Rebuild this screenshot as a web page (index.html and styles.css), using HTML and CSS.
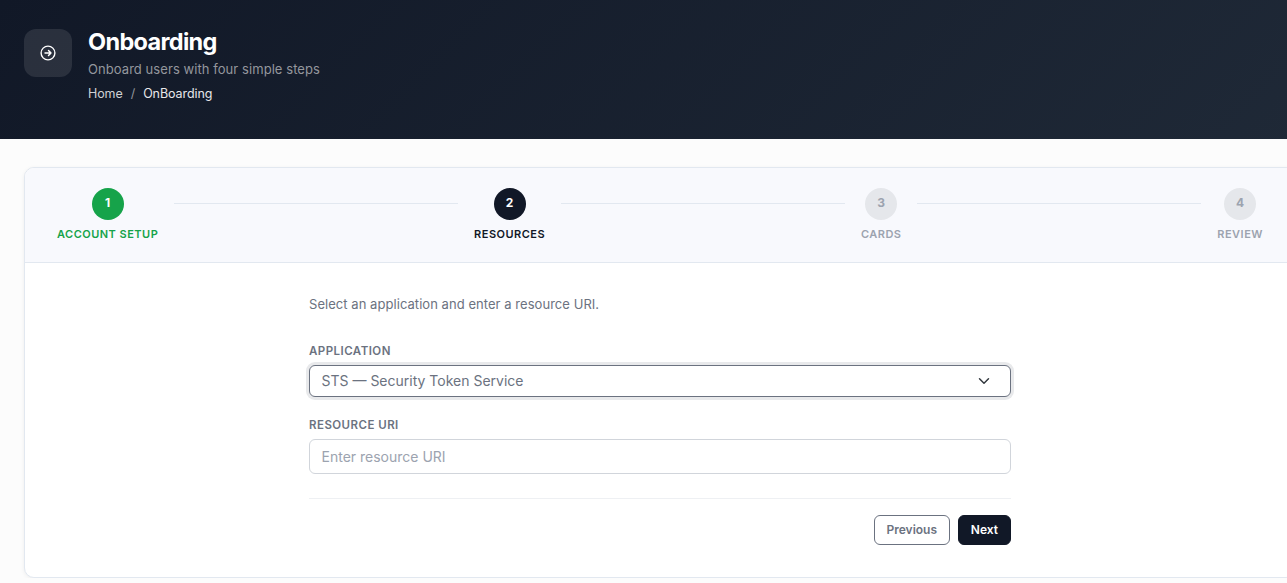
FILE: index.html
```html
<!DOCTYPE html>
<html lang="en">
<head>
    <meta charset="UTF-8">
    <meta name="viewport" content="width=device-width, initial-scale=1.0">
    <title>Onboarding</title>
    <link rel="stylesheet" href="styles.css">
</head>
<body>
    <header class="page-header">
        <div class="header-icon">
            <svg width="16" height="16" viewBox="0 0 16 16" fill="none" stroke="#fff" stroke-width="1.4" stroke-linecap="round" stroke-linejoin="round">
                <circle cx="8" cy="8" r="6.9"/>
                <path d="M5 8h6M8.5 5.4L11 8l-2.5 2.6"/>
            </svg>
        </div>
        <div class="header-text">
            <h1>Onboarding</h1>
            <p class="subtitle">Onboard users with four simple steps</p>
            <nav class="breadcrumb">
                <a href="#">Home</a>
                <span class="separator">/</span>
                <span class="current">OnBoarding</span>
            </nav>
        </div>
    </header>

    <main class="card">
        <div class="stepper">
            <div class="step done">
                <div class="step-number">1</div>
                <div class="step-label">Account Setup</div>
            </div>
            <div class="step-line"></div>
            <div class="step active">
                <div class="step-number">2</div>
                <div class="step-label">Resources</div>
            </div>
            <div class="step-line"></div>
            <div class="step">
                <div class="step-number">3</div>
                <div class="step-label">Cards</div>
            </div>
            <div class="step-line"></div>
            <div class="step">
                <div class="step-number">4</div>
                <div class="step-label">Review</div>
            </div>
        </div>

        <form class="resource-form">
            <p class="intro">Select an application and enter a resource URI.</p>

            <label for="application">Application</label>
            <select id="application">
                <option value="sts">STS — Security Token Service</option>
            </select>

            <label for="resourceUri">Resource URI</label>
            <input type="text" id="resourceUri" placeholder="Enter resource URI">

            <div class="actions">
                <button type="button" class="btn btn-outline">Previous</button>
                <button type="button" class="btn btn-dark">Next</button>
            </div>
        </form>
    </main>
</body>
</html>
```

FILE: styles.css
```css
* {
    box-sizing: border-box;
}

html {
    overflow: hidden;
}

body {
    font-family: Inter, sans-serif;
    margin: 0;
    width: 1320px;
    background-color: #fcfcfc;
    color: #6b7280;
}

/* Header */
.page-header {
    display: flex;
    align-items: flex-start;
    gap: 16px;
    height: 139px;
    padding: 29px 24px;
    background: linear-gradient(135deg, #111827 0%, #1f2937 100%);
}

.header-icon {
    display: flex;
    align-items: center;
    justify-content: center;
    width: 48px;
    height: 48px;
    border-radius: 12px;
    background-color: rgba(255, 255, 255, 0.1);
}

h1 {
    margin: -2px 0 0;
    font-size: 23.5px;
    font-weight: 700;
    line-height: 29px;
    letter-spacing: -0.68px;
    color: #fff;
}

.subtitle {
    margin: 3px 0 0;
    font-size: 13px;
    line-height: 20px;
    letter-spacing: 0.065px;
    color: #94979d;
}

.breadcrumb {
    display: flex;
    gap: 8px;
    margin-top: 5px;
    font-size: 12.5px;
    line-height: 20px;
    letter-spacing: -0.08px;
}

.breadcrumb a {
    color: #cfd1d4;
    text-decoration: none;
}

.breadcrumb .separator {
    color: #94979d;
}

.breadcrumb .current {
    color: #e8e8ea;
}

/* Card */
.card {
    width: 1272px;
    height: 411px;
    margin: 28px 24px 0;
    border: 1px solid #e2e8f0;
    border-radius: 10px;
    background-color: #fff;
    box-shadow: 0 1px 4px rgba(0, 0, 0, 0.06);
    overflow: hidden;
}

/* Steps */
.stepper {
    display: flex;
    gap: 16px;
    height: 95px;
    padding: 20px 32px;
    background-color: #f8f9fd;
    border-bottom: 1px solid #e2e8f0;
}

.step {
    display: flex;
    flex-direction: column;
    align-items: center;
    gap: 6px;
    color: #9ca3af;
}

.step-number {
    width: 32px;
    height: 32px;
    border-radius: 50%;
    background-color: #e5e7eb;
    font-size: 12px;
    font-weight: 700;
    line-height: 30px;
    text-align: center;
}

.step-label {
    font-size: 11px;
    font-weight: 600;
    line-height: 16px;
    letter-spacing: 0.48px;
    text-transform: uppercase;
}

.step-line {
    flex: 1;
    height: 1px;
    margin-top: 15px;
    background-color: #e2e8f0;
}

.step.done {
    color: #16a34a;
}

.step.done .step-number {
    background-color: #16a34a;
    color: #fff;
}

.step.active {
    color: #111827;
}

.step.active .step-number {
    background-color: #111827;
    color: #fff;
}

/* Form */
.resource-form {
    width: 702px;
    margin: 0 auto;
    padding-top: 31px;
}

.intro {
    margin: 0 0 29px;
    font-size: 13px;
    line-height: 20px;
    letter-spacing: 0.05px;
}

label {
    display: block;
    margin-bottom: 6px;
    font-size: 11.5px;
    font-weight: 600;
    line-height: 16px;
    letter-spacing: 0.46px;
    text-transform: uppercase;
}

select,
input {
    display: block;
    width: 100%;
    padding: 0 11.5px;
    border: 1px solid #d1d5db;
    border-radius: 6px;
    background-color: #fff;
    font-family: inherit;
    font-size: 14px;
    color: #6b7280;
}

select {
    appearance: none;
    height: 32px;
    margin-bottom: 20px;
    padding-bottom: 2px;
    border-color: #6b7280;
    background-image: url("data:image/svg+xml,%3Csvg xmlns='http://www.w3.org/2000/svg' viewBox='0 0 16 16'%3E%3Cpath fill='none' stroke='%23343a40' stroke-width='2' stroke-linecap='round' stroke-linejoin='round' d='m2 5 6 6 6-6'/%3E%3C/svg%3E");
    background-repeat: no-repeat;
    background-position: right 20px center;
    background-size: 12px 12px;
    box-shadow: 0 0 0 3px #e8e9eb;
}

input {
    height: 35px;
}

input::placeholder {
    color: #9ca3af;
}

.actions {
    display: flex;
    justify-content: flex-end;
    gap: 8px;
    margin-top: 24px;
    padding-top: 16px;
    border-top: 1px solid #eef0f3;
}

.btn {
    height: 30px;
    padding: 0 12px 2px;
    border: 1px solid #6b7280;
    border-radius: 6px;
    background-color: #fff;
    font-family: inherit;
    font-size: 12px;
    font-weight: 600;
    color: #6b7280;
    cursor: pointer;
}

.btn-outline {
    width: 76px;
    padding: 0 0 2px;
}

.btn-dark {
    border-color: #111827;
    background-color: #111827;
    color: #fff;
}
```
